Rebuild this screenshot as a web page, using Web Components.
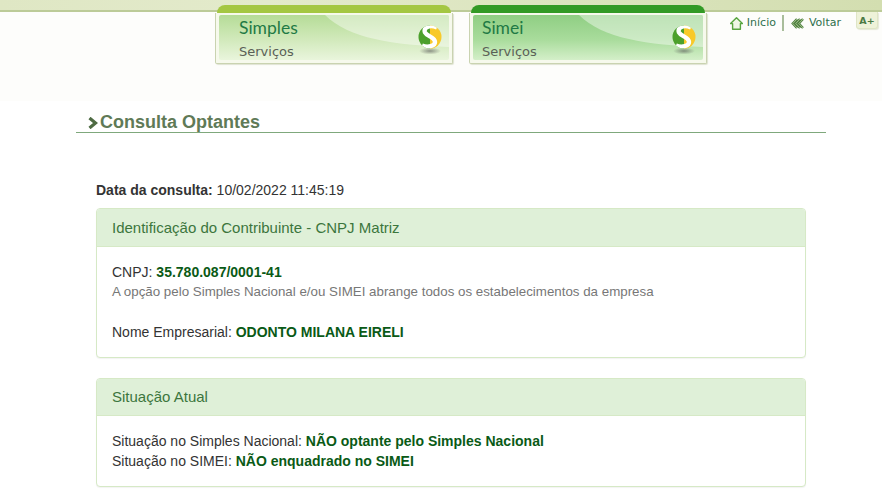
<!DOCTYPE html>
<html lang="pt-BR">
<head>
<meta charset="utf-8">
<title>Consulta Optantes</title>
<style>
  html, body { margin: 0; background: #fff; overflow: hidden; }
  body { font: 14px "Liberation Sans", Arial, sans-serif; color: #333; height: 492px; }
</style>
</head>
<body>
<sn-header>
  <sn-tab slot="tabs" name="Simples" bar="#a4c742" tint="light" style="margin-right:16px"></sn-tab>
  <sn-tab slot="tabs" name="Simei" bar="#329a25" tint="dark" indent="9"></sn-tab>
</sn-header>
<sn-main>
  <sn-title>Consulta Optantes</sn-title>
  <sn-date label="Data da consulta:">10/02/2022 11:45:19</sn-date>
  <sn-panel heading="Identificação do Contribuinte - CNPJ Matriz" style="height:150px">
    <div>CNPJ: <sn-strong>35.780.087/0001-41</sn-strong></div>
    <sn-note>A opção pelo Simples Nacional e/ou SIMEI abrange todos os estabelecimentos da empresa</sn-note>
    <div style="margin-top:20px">Nome Empresarial: <sn-strong>ODONTO MILANA EIRELI</sn-strong></div>
  </sn-panel>
  <sn-panel heading="Situação Atual" compact style="height:109px;margin-top:20px">
    <div>Situação no Simples Nacional: <sn-strong>NÃO optante pelo Simples Nacional</sn-strong></div>
    <div>Situação no SIMEI: <sn-strong>NÃO enquadrado no SIMEI</sn-strong></div>
  </sn-panel>
</sn-main>

<template id="header-tpl">
  <style>
    :host { display: block; height: 101px; background: #fdfdfb; }
    .band { height: 10px; background: linear-gradient(90deg, #dfe7c4 0%, #e3eacb 30%, #d3deb0 100%); border-bottom: 2px solid #bccb98; }
    .row { display: flex; justify-content: space-between; margin-top: -7px; padding: 0 4px 0 215px; }
    .tabs { display: flex; }
    .links { display: flex; align-items: flex-start; padding-top: 10px; }
  </style>
  <div class="band"></div>
  <div class="row">
    <div class="tabs"><slot name="tabs"></slot></div>
    <div class="links">
      <sn-toplink label="Início" icon="home"></sn-toplink>
      <sn-toplink label="Voltar" icon="back"></sn-toplink>
      <sn-fontbtn>A+</sn-fontbtn>
    </div>
  </div>
</template>

<template id="tab-tpl">
  <style>
    :host { display: block; width: 238px; position: relative; }
    .bar { height: 8px; margin: 0 2px; border-radius: 8px 8px 0 0; background: var(--bar); }
    .card { box-sizing: border-box; height: 51px; border: 1px solid #c9d3b0; border-top: 0; border-radius: 0 0 2px 2px; background: #f6f9ec; padding: 2px 3px 3px; box-shadow: 1px 1px 1px #dfe3d2; }
    .in { position: relative; overflow: hidden; height: 100%; border-radius: 2px; padding-left: var(--indent); }
    .light .in { background: linear-gradient(#b5dc97 0%, #cfe8b8 50%, #e9f5dc 100%); }
    .dark .in { background: linear-gradient(#8fce83 0%, #a9dc9c 55%, #d4efc9 100%); }
    svg.sheen { position: absolute; left: 0; top: 0; }
    .t { position: relative; font: 17.5px/20px Lato, "Open Sans", sans-serif; color: #1f7a45; margin-top: 1px; padding-top: 2px; }
    .s { position: relative; font: 13px/16px "DejaVu Sans", sans-serif; color: #5a5f57; margin-top: 6px; }
    svg.logo { position: absolute; right: 6px; top: 9px; }
  </style>
  <div class="bar"></div>
  <div class="card">
    <div class="in">
      <svg class="sheen" width="232" height="46" viewBox="0 0 232 46"><path d="M106 0C130 24 175 30 232 32V0Z" fill="#fff" fill-opacity=".42"/></svg>
      <div class="t"></div>
      <div class="s">Serviços</div>
      <svg class="logo" width="26" height="32" viewBox="0 0 26 32">
        <defs>
          <radialGradient id="sh"><stop offset="0" stop-color="#555" stop-opacity=".6"/><stop offset="1" stop-color="#555" stop-opacity="0"/></radialGradient>
          <clipPath id="disc"><circle cx="13" cy="13" r="11.5"/></clipPath>
        </defs>
        <ellipse cx="13" cy="27" rx="11" ry="3.5" fill="url(#sh)"/>
        <g clip-path="url(#disc)">
          <rect x="0" y="0" width="13" height="26" fill="#4ca02c"/>
          <rect x="13" y="0" width="13" height="26" fill="#f8c92a"/>
          <path d="M20 3.5C12 0 6 4 8 8.5C10 12.5 18 13 18 18C18 22 11 24 5 21.5" fill="none" stroke="#fff" stroke-width="4.4"/>
        </g>
      </svg>
    </div>
  </div>
</template>

<template id="toplink-tpl">
  <style>
    :host { display: flex; align-items: center; gap: 4px; height: 16px; font: 11px/16px "DejaVu Sans", sans-serif; color: #2e6f4c; }
    :host([icon="home"]) { padding-right: 6px; border-right: 2px solid #a9bd9b; margin-right: 7px; }
    :host([icon="back"]) { margin-right: 15px; gap: 5px; }
    svg { display: block; }
  </style>
  <svg width="13" height="13" viewBox="0 0 13 13"></svg>
  <span></span>
</template>

<template id="fontbtn-tpl">
  <style>
    :host { display: block; box-sizing: border-box; width: 22px; height: 17px; margin-top: -3px; background: #eef2d9; border: 1px solid #dfe5c6; border-top: 0; border-radius: 0 0 3px 3px; box-shadow: 1px 1px 1px #e5e8d8; font: bold 9.5px/17px "DejaVu Sans", sans-serif; color: #4c7a45; text-align: center; }
  </style>
  <slot></slot>
</template>

<template id="main-tpl">
  <style>
    :host { display: block; padding: 0 56px 0 76px; }
  </style>
  <slot></slot>
</template>

<template id="title-tpl">
  <style>
    :host { display: flex; align-items: center; box-sizing: border-box; height: 32px; border-bottom: 1px solid #7fa87c; padding: 11px 0 0 12px; font: bold 18px/20px "Liberation Sans", Arial, sans-serif; color: #5f7a57; }
    svg { display: block; margin: 1px 1px 0 0; }
  </style>
  <svg width="11" height="12" viewBox="0 0 11 12"><path d="M1.5 1L7.5 6L1.5 11" fill="none" stroke="#4e6b43" stroke-width="3.2"/></svg>
  <slot></slot>
</template>

<template id="date-tpl">
  <style>
    :host { display: block; margin: 49px 20px 10px; height: 16px; line-height: 16px; color: #333; }
    b { color: #333; }
  </style>
  <b></b> <slot></slot>
</template>

<template id="panel-tpl">
  <style>
    :host { display: block; box-sizing: border-box; margin: 0 20px; border: 1px solid #d6e9c6; border-radius: 4px; background: #fff; box-shadow: 0 1px 1px rgba(0,0,0,.05); overflow: hidden; }
    .h { box-sizing: border-box; height: 38px; padding: 10px 15px; background: #dff0d8; border-bottom: 1px solid #d6e9c6; font-size: 15px; line-height: 18px; color: #3c763d; }
    :host([compact]) .h { height: 37px; padding-top: 9px; }
    .b { padding: 15px 15px; line-height: 20px; color: #333; }
  </style>
  <div class="h"></div>
  <div class="b"><slot></slot></div>
</template>

<template id="strong-tpl">
  <style>
    :host { display: inline; font-weight: bold; color: #0a5a16; }
  </style>
  <slot></slot>
</template>

<template id="note-tpl">
  <style>
    :host { display: block; font-size: 13.33px; line-height: 20px; color: #777; }
  </style>
  <slot></slot>
</template>

<script>
function fromTemplate(el, id) {
  const content = document.getElementById(id).content.cloneNode(true);
  return el.attachShadow({ mode: 'open' }).appendChild(content) && el.shadowRoot;
}

const chevrons = 'M6 2L1.8 6.5L6 11M9 2L4.8 6.5L9 11M12 2L7.8 6.5L12 11';
const icons = {
  home: '<path d="M6.5 .8L12.4 6.6H10.4V12.2H2.6V6.6H.6Z" fill="#eef7e4" stroke="#58a53f" stroke-width="1.4" stroke-linejoin="round"/>',
  back: '<path d="' + chevrons + '" fill="none" stroke="#4f8040" stroke-width="2.4"/><path d="' + chevrons + '" fill="none" stroke="#c7dcae" stroke-width=".7"/>'
};

class SnHeader extends HTMLElement {
  constructor () { super(); fromTemplate(this, 'header-tpl'); }
}
class SnTab extends HTMLElement {
  constructor () {
    super();
    const root = fromTemplate(this, 'tab-tpl');
    root.querySelector('.t').textContent = this.getAttribute('name');
    root.querySelector('.card').classList.add(this.getAttribute('tint'));
    this.style.setProperty('--bar', this.getAttribute('bar'));
    this.style.setProperty('--indent', (this.getAttribute('indent') || 20) + 'px');
  }
}
class SnTopLink extends HTMLElement {
  constructor () {
    super();
    const root = fromTemplate(this, 'toplink-tpl');
    root.querySelector('span').textContent = this.getAttribute('label');
    root.querySelector('svg').innerHTML = icons[this.getAttribute('icon')];
  }
}
class SnDate extends HTMLElement {
  constructor () {
    super();
    fromTemplate(this, 'date-tpl').querySelector('b').textContent = this.getAttribute('label');
  }
}
class SnPanel extends HTMLElement {
  constructor () {
    super();
    fromTemplate(this, 'panel-tpl').querySelector('.h').textContent = this.getAttribute('heading');
  }
}
// the elements with nothing but a template and a slot
const plain = { 'sn-fontbtn': 'fontbtn-tpl', 'sn-main': 'main-tpl', 'sn-title': 'title-tpl', 'sn-strong': 'strong-tpl', 'sn-note': 'note-tpl' };
Object.keys(plain).forEach((name) => {
  customElements.define(name, class extends HTMLElement {
    constructor () { super(); fromTemplate(this, plain[name]); }
  });
});
customElements.define('sn-toplink', SnTopLink);
customElements.define('sn-tab', SnTab);
customElements.define('sn-header', SnHeader);
customElements.define('sn-date', SnDate);
customElements.define('sn-panel', SnPanel);
</script>
</body>
</html>
